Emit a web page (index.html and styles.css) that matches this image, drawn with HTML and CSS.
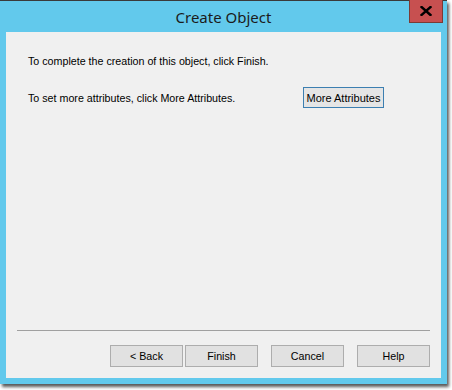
FILE: index.html
```html
<!DOCTYPE html>
<html lang="en">
<head>
  <meta charset="UTF-8" />
  <title>Create Object</title>
  <link rel="stylesheet" href="styles.css">
</head>
<body>
  <div class="window">
    <div class="titlebar">
      <span class="title">Create Object</span>
      <button class="close" aria-label="Close">
        <svg width="12" height="10" viewBox="0 0 12 10">
          <path d="M1.5 1 L10.5 9 M10.5 1 L1.5 9" stroke="#000" stroke-width="2.4" stroke-linecap="square" />
        </svg>
      </button>
    </div>

    <div class="client">
      <div class="content">
        <p class="line">To complete the creation of this object, click Finish.</p>
        <div class="row">
          <p class="line">To set more attributes, click More Attributes.</p>
          <button class="btn default">More Attributes</button>
        </div>
      </div>

      <div class="footer">
        <div class="buttons">
          <button class="btn wide">&lt; Back</button>
          <button class="btn wide next">Finish</button>
          <button class="btn wide">Cancel</button>
          <button class="btn wide">Help</button>
        </div>
      </div>
    </div>
  </div>
</body>
</html>
```

FILE: styles.css
```css
* {
  margin: 0;
  padding: 0;
  box-sizing: border-box;
}

body {
  background: #fff;
  font-family: 'Liberation Sans', Arial, sans-serif;
  width: 452px;
  height: 390px;
  overflow: hidden;
}

.window {
  position: relative;
  width: 447px;
  height: 384px;
  background: #62c9ec;
  border-top: 1px solid #3a3a3a;
  display: flex;
  flex-direction: column;
  box-shadow: 2px 3px 3px rgba(0, 0, 0, 0.65);
}

.titlebar {
  height: 31px;
  display: flex;
  align-items: center;
  justify-content: center;
}

.title {
  font-family: 'Noto Sans', 'Open Sans', sans-serif;
  font-size: 15px;
  color: #1b1b1b;
  margin-top: 1px;
}

.close {
  position: absolute;
  top: -1px;
  left: 409px;
  width: 34px;
  height: 23px;
  background: #c75050;
  border: 1px solid #7b3b35;
  border-top: none;
  display: flex;
  align-items: center;
  justify-content: center;
}

.client {
  flex: 1;
  margin: 0 6px 6px;
  background: #f0f0f0;
  display: flex;
  flex-direction: column;
  padding: 0 11px 11px;
}

.content {
  flex: 1;
  padding: 23px 46px 0 11px;
}

.line {
  font-size: 10.7px;
  line-height: 13px;
  color: #000;
}

.row {
  display: flex;
  justify-content: space-between;
  align-items: center;
  margin-top: 19px;
}

.row .line {
  margin-top: 1px;
}

.btn {
  font-family: 'Liberation Sans', Arial, sans-serif;
  font-size: 10.7px;
  color: #000;
  background: #e1e1e1;
  border: 1px solid #adadad;
  height: 22px;
}

.btn.default {
  width: 81px;
  height: 21px;
  border-color: #3c7fb1;
  background: #e5e5e5;
  font-size: 11px;
}

.footer {
  border-top: 1px solid #a0a0a0;
}

.buttons {
  display: flex;
  justify-content: flex-end;
  gap: 13px;
  margin-top: 14px;
}

.btn.wide {
  width: 73px;
}

.buttons .next {
  margin-left: -11px;
}
```
